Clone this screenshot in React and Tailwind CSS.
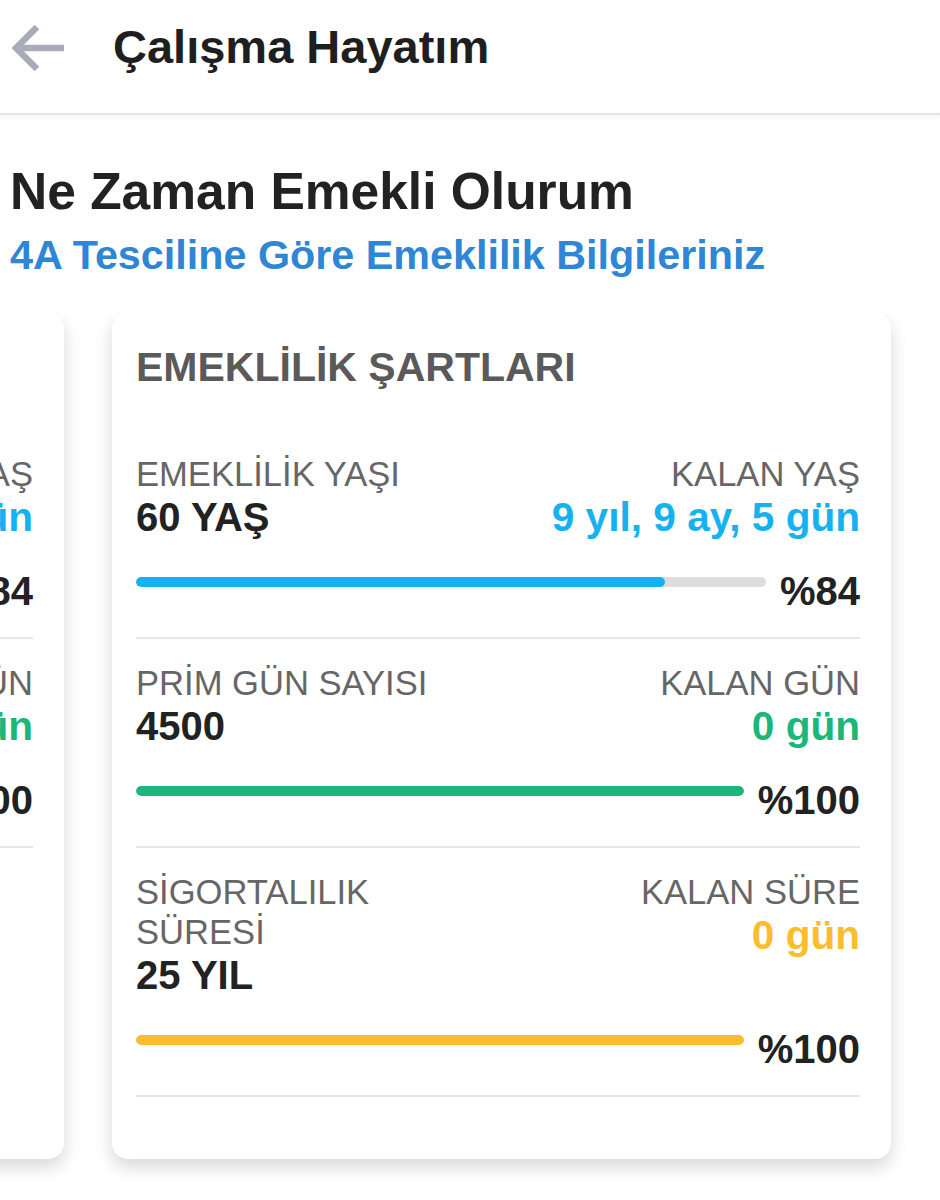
import React from 'react';

const FONT = "font-['Liberation_Sans','Noto_Sans',Arial,sans-serif]";

// Emeklilik şartları kartındaki satırlar
const rowsMain = [
  {
    label: 'EMEKLİLİK YAŞI',
    value: '60 YAŞ',
    remainLabel: 'KALAN YAŞ',
    remain: '9 yıl, 9 ay, 5 gün',
    percent: 84,
    tone: 'blue',
  },
  {
    label: 'PRİM GÜN SAYISI',
    value: '4500',
    remainLabel: 'KALAN GÜN',
    remain: '0 gün',
    percent: 100,
    tone: 'green',
  },
  {
    label: 'SİGORTALILIK SÜRESİ',
    value: '25 YIL',
    remainLabel: 'KALAN SÜRE',
    remain: '0 gün',
    percent: 100,
    tone: 'amber',
  },
];

const rowsPrev = [
  {
    label: 'EMEKLİLİK YAŞI',
    value: '60 YAŞ',
    remainLabel: 'KALAN YAŞ',
    remain: '9 yıl, 9 ay, 5 gün',
    percent: 84,
    tone: 'blue',
  },
  {
    label: 'PRİM GÜN SAYISI',
    value: '7200',
    remainLabel: 'KALAN GÜN',
    remain: '0 gün',
    percent: 100,
    tone: 'green',
  },
];

const tones = {
  blue: { text: 'text-[#15b2ef]', bar: 'bg-[#15b2f2]' },
  green: { text: 'text-[#1bb77a]', bar: 'bg-[#1bb77a]' },
  amber: { text: 'text-[#fbbd2e]', bar: 'bg-[#fbbd2e]' },
};

const BackArrow = () => (
  <svg width="54" height="48" viewBox="0 0 54 48" fill="none" stroke="#a9abb8" strokeWidth="6.5" strokeLinecap="butt">
    <path d="M3 24 H52" />
    <path d="M25 3 L4 24 L25 45" strokeLinejoin="miter" />
  </svg>
);

const Row = ({ row }) => {
  const tone = tones[row.tone];
  return (
    <div>
      <div className="grid grid-cols-2 gap-4">
        <div>
          <div className="text-[34.6px] leading-[40px] text-[#666666]">{row.label}</div>
          <div className="text-[40px] leading-[46px] font-bold text-[#222222]">{row.value}</div>
        </div>
        <div className="text-right">
          <div className="text-[34.6px] leading-[40px] text-[#666666]">{row.remainLabel}</div>
          <div className={`text-[40.6px] leading-[46px] font-bold ${tone.text}`}>{row.remain}</div>
        </div>
      </div>
      <div className="mt-[28px] flex items-start gap-[14px]">
        <div className="mt-[9px] h-[10px] flex-1 rounded-full bg-[#dddddd] overflow-hidden">
          <div className={`h-full rounded-full ${tone.bar}`} style={{ width: `${row.percent}%` }} />
        </div>
        <div className="text-[40px] leading-[46px] font-bold text-[#222222]">%{row.percent}</div>
      </div>
      <div className="mt-[23px] h-[2px] bg-[#e6e6e6]" />
    </div>
  );
};

const ConditionsCard = ({ rows }) => (
  <div className="w-[779px] shrink-0 rounded-[16px] bg-white pt-[30px] pl-6 pr-[31px] pb-[62px] shadow-[0_8px_18px_rgba(0,0,0,0.16)]">
    <div className="text-[41px] leading-[49px] font-bold text-[#5a5a5a]">EMEKLİLİK ŞARTLARI</div>
    <div className="mt-[62px] flex flex-col gap-[24px]">
      {rows.map((row) => (
        <Row key={row.label} row={row} />
      ))}
    </div>
  </div>
);

export default function App() {
  return (
    <div className={`w-[940px] min-h-[1200px] bg-white ${FONT}`}>
      <header className="h-[115px] flex items-start border-b-2 border-[#e4e4e4] shadow-[0_3px_6px_rgba(0,0,0,0.04)]">
        <div className="pl-[12px] pt-[24px] w-[113px]">
          <BackArrow />
        </div>
        <h1 className="pt-[20px] text-[47px] leading-[54px] font-bold text-[#1f1f1f]">Çalışma Hayatım</h1>
      </header>

      <section className="pl-[10px] mt-[46px]">
        <h2 className="text-[51.5px] leading-[60px] font-bold text-[#222222]">Ne Zaman Emekli Olurum</h2>
        <p className="mt-[10px] text-[41.3px] leading-[48px] font-bold text-[#2e86d5]">
          4A Tesciline Göre Emeklilik Bilgileriniz
        </p>
      </section>

      <div className="mt-[34px] overflow-hidden pb-[40px]">
        <div className="ml-[-715px] flex items-stretch gap-[48px]">
          <ConditionsCard rows={rowsPrev} />
          <ConditionsCard rows={rowsMain} />
        </div>
      </div>
    </div>
  );
}
